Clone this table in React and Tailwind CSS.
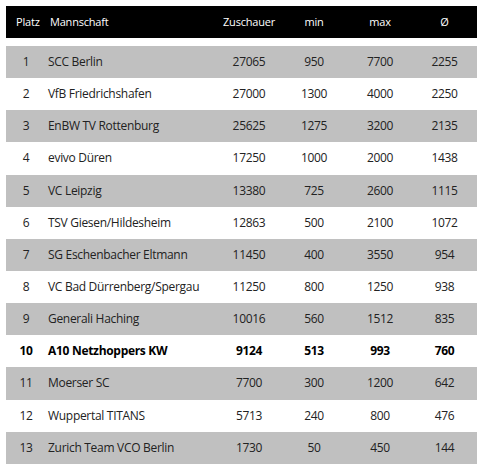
import React from "react";

const rows = [
  [1, "SCC Berlin", 27065, 950, 7700, 2255],
  [2, "VfB Friedrichshafen", 27000, 1300, 4000, 2250],
  [3, "EnBW TV Rottenburg", 25625, 1275, 3200, 2135],
  [4, "evivo Düren", 17250, 1000, 2000, 1438],
  [5, "VC Leipzig", 13380, 725, 2600, 1115],
  [6, "TSV Giesen/Hildesheim", 12863, 500, 2100, 1072],
  [7, "SG Eschenbacher Eltmann", 11450, 400, 3550, 954],
  [8, "VC Bad Dürrenberg/Spergau", 11250, 800, 1250, 938],
  [9, "Generali Haching", 10016, 560, 1512, 835],
  [10, "A10 Netzhoppers KW", 9124, 513, 993, 760],
  [11, "Moerser SC", 7700, 300, 1200, 642],
  [12, "Wuppertal TITANS", 5713, 240, 800, 476],
  [13, "Zurich Team VCO Berlin", 1730, 50, 450, 144],
];

const cols = "grid grid-cols-[40px_172px_62px_68px_64px_65px] items-center";

const App = () => {
  return (
    <div
      className="w-[483px] h-[472px] bg-white pt-[6px] px-[6px]"
      style={{ fontFamily: '"Open Sans", "Noto Sans", sans-serif' }}
    >
      <div className={`${cols} h-[32px] bg-black text-white text-[11px] tracking-[-0.2px]`}>
        <div className="pl-[10px]">Platz</div>
        <div className="pl-[4px]">Mannschaft</div>
        <div className="text-center">Zuschauer</div>
        <div className="text-center">min</div>
        <div className="text-center">max</div>
        <div className="text-center">Ø</div>
      </div>
      <div className="mt-[8px]">
        {rows.map((r, i) => (
          <div
            key={r[0]}
            className={`${cols} h-[32.15px] text-[12px] tracking-[-0.3px] ${
              i % 2 === 0 ? "bg-[#c0c0c0]" : "bg-white"
            } ${r[0] === 10 ? "font-bold text-black" : "text-[#222222]"}`}
          >
            <div className="text-center">{r[0]}</div>
            <div className="pl-[2px]">{r[1]}</div>
            <div className="text-center">{r[2]}</div>
            <div className="text-center">{r[3]}</div>
            <div className="text-center">{r[4]}</div>
            <div className="text-center">{r[5]}</div>
          </div>
        ))}
      </div>
    </div>
  );
};

export default App;
